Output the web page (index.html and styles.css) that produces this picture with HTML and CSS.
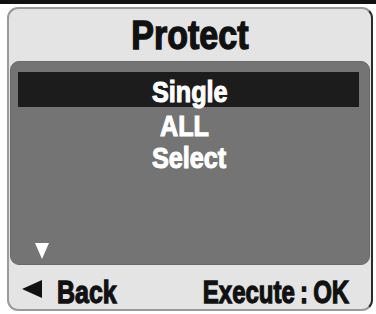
FILE: index.html
```html
<!DOCTYPE html>
<html>
<head>
<meta charset="utf-8">
<link rel="stylesheet" href="styles.css">
</head>
<body>
<div class="screen">
  <div class="panel">
    <div class="title"><span>Protect</span></div>
    <div class="menu">
      <div class="list">
        <div class="item sel"><span>Single</span></div>
        <div class="item indent"><span>ALL</span></div>
        <div class="item"><span>Select</span></div>
      </div>
      <div class="more">
        <svg width="14" height="16" viewBox="0 0 14 16"><polygon points="0,0 14,0 7,16" fill="#fff"/></svg>
      </div>
    </div>
    <div class="footer">
      <div class="back">
        <svg class="tri" width="20" height="18" viewBox="0 0 20 18"><polygon points="20,0 20,18 0,9" fill="#111"/></svg>
        <span>Back</span>
      </div>
      <div class="exec"><span>Execute : OK</span></div>
    </div>
  </div>
</div>
</body>
</html>
```

FILE: styles.css
```css
* { box-sizing: border-box; }
html, body { margin: 0; padding: 0; background: #fff; }
body { width: 376px; height: 314px; overflow: hidden; }

.screen {
  width: 376px;
  height: 314px;
  border-top: 4px solid #111;
  padding: 3px 3px 3px 7px;
}

.panel {
  height: 304px;
  background: #e4e4e4;
  border: 2px solid #9a9a9a;
  border-right: 2px solid #2a2a2a;
  border-radius: 11px;
  padding: 0 1px;
  display: flex;
  flex-direction: column;
  font-family: "Liberation Sans", Arial, sans-serif;
  font-weight: bold;
}

.title {
  height: 52px;
  line-height: 52px;
  text-align: center;
  font-size: 40px;
  color: #111;
}
.title span {
  display: inline-block;
  transform: scaleX(0.85);
  -webkit-text-stroke: 1.4px #111;
}

.menu {
  height: 204px;
  background: #747474;
  border: 1px solid #6a6a6a;
  border-radius: 9px;
  display: flex;
  flex-direction: column;
  justify-content: space-between;
  padding: 10px 10px 5px 7px;
}

.item {
  font-size: 30px;
  line-height: 32px;
  color: #fff;
  padding-left: 134px;
}
.item span {
  display: inline-block;
  transform: scaleX(0.84);
  transform-origin: left center;
  -webkit-text-stroke: 1.1px #fff;
}

.item.sel {
  background: #1c1c1c;
  height: 35px;
  padding-top: 4px;
}

.item.sel + .item { margin-top: 3px; }
.item.indent { padding-left: 142px; }

.more { padding-left: 17px; height: 16px; }
.more svg { display: block; }

.footer {
  height: 44px;
  display: flex;
  align-items: center;
  justify-content: space-between;
  padding: 10px 21px 0 12px;
  font-size: 32px;
  color: #111;
}

.back { display: flex; align-items: center; gap: 15px; }
.back .tri { display: block; margin-bottom: 6px; }
.back span {
  display: inline-block;
  transform: scaleX(0.78);
  transform-origin: left center;
  -webkit-text-stroke: 1.3px #111;
}
.exec span {
  display: inline-block;
  word-spacing: -2px;
  transform: scaleX(0.75);
  transform-origin: right center;
  -webkit-text-stroke: 1.3px #111;
}
```
